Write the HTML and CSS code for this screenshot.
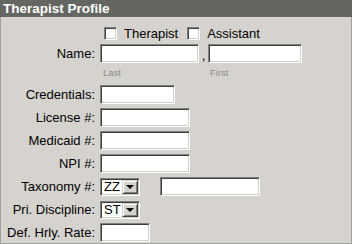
FILE: index.html
```html
<!DOCTYPE html>
<html>
<head>
<meta charset="utf-8">
<link rel="stylesheet" href="styles.css">
</head>
<body>
<div class="panel">
  <div class="header">Therapist Profile</div>
  <div class="form">
    <div class="row check-row">
      <span class="label"></span>
      <div class="field">
        <span class="check"></span><span class="check-text">Therapist</span>
        <span class="check check2"></span><span class="check-text">Assistant</span>
      </div>
    </div>
    <div class="row">
      <span class="label">Name:</span>
      <div class="field">
        <span class="input w-last"></span><span class="comma">,</span><span class="input w-first"></span>
      </div>
    </div>
    <div class="row sub-row">
      <span class="label"></span>
      <div class="field">
        <span class="sub sub-last">Last</span><span class="sub">First</span>
      </div>
    </div>
    <div class="row">
      <span class="label">Credentials:</span>
      <div class="field"><span class="input w-cred"></span></div>
    </div>
    <div class="row">
      <span class="label">License #:</span>
      <div class="field"><span class="input w-lic"></span></div>
    </div>
    <div class="row">
      <span class="label">Medicaid #:</span>
      <div class="field"><span class="input w-lic"></span></div>
    </div>
    <div class="row">
      <span class="label">NPI #:</span>
      <div class="field"><span class="input w-lic"></span></div>
    </div>
    <div class="row">
      <span class="label">Taxonomy #:</span>
      <div class="field">
        <span class="select"><span class="sel-text">ZZ</span><span class="sel-btn"><span class="tri"></span></span></span>
        <span class="input w-tax"></span>
      </div>
    </div>
    <div class="row">
      <span class="label">Pri. Discipline:</span>
      <div class="field">
        <span class="select"><span class="sel-text">ST</span><span class="sel-btn"><span class="tri"></span></span></span>
      </div>
    </div>
    <div class="row">
      <span class="label">Def. Hrly. Rate:</span>
      <div class="field"><span class="input w-rate"></span></div>
    </div>
  </div>
</div>
</body>
</html>
```

FILE: styles.css
```css
html, body {
  margin: 0;
  padding: 0;
}
body {
  font-family: "Liberation Sans", Arial, sans-serif;
  font-size: 13px;
  color: #000;
  background: #d6d3ce;
}
.panel {
  width: 352px;
  height: 244px;
  box-sizing: border-box;
  border: 1px solid #a09f9c;
  border-top: none;
  background: #d6d3ce;
}
.header {
  height: 17px;
  line-height: 17px;
  background: #646662;
  color: #fff;
  font-weight: bold;
  font-size: 13.5px;
  padding-left: 3px;
  margin: 0 -1px;
}
.form {
  display: flex;
  flex-direction: column;
  gap: 4px;
  padding-top: 10px;
}
.row {
  display: flex;
  align-items: center;
  height: 19px;
  gap: 5px;
}
.label {
  width: 94px;
  flex: none;
  text-align: right;
  line-height: 19px;
  white-space: nowrap;
}
.field {
  display: flex;
  align-items: center;
}
.check-row {
  height: 13px;
}
.check {
  flex: none;
  width: 13px;
  height: 13px;
  box-sizing: border-box;
  background: #fff;
  border: 1px solid;
  border-color: #808080 #fff #fff #808080;
  box-shadow: inset 1px 1px #404040, inset -1px -1px #d4d0c8;
  margin-left: 4px;
}
.check-text {
  margin-left: 7px;
}
.check2 {
  margin-left: 9px;
}
.input {
  display: block;
  flex: none;
  height: 19px;
  box-sizing: border-box;
  background: #fff;
  border: 1px solid;
  border-color: #808080 #fff #fff #808080;
  box-shadow: inset 1px 1px #404040, inset -1px -1px #d4d0c8;
}
.w-last { width: 99px; }
.w-first { width: 94px; }
.w-cred { width: 75px; }
.w-lic { width: 90px; }
.w-rate { width: 50px; }
.w-tax { width: 100px; margin-left: 20px; }
.comma {
  width: 9px;
  text-align: center;
  align-self: flex-end;
  line-height: 15px;
}
.sub-row {
  height: 14px;
  align-items: flex-start;
}
.sub {
  font-size: 9.5px;
  color: #8a8a8a;
  line-height: 12px;
}
.sub-last {
  margin-left: 3px;
  width: 107px;
}
.select {
  flex: none;
  width: 40px;
  height: 18px;
  box-sizing: border-box;
  display: flex;
  align-items: center;
  justify-content: space-between;
  background: #fff;
  border: 1px solid;
  border-color: #808080 #fff #fff #808080;
  box-shadow: inset 1px 1px #404040, inset -1px -1px #d4d0c8;
  padding: 2px 1px 2px 3px;
}
.sel-text {
  font-size: 13px;
  line-height: 14px;
}
.sel-btn {
  flex: none;
  width: 16px;
  height: 14px;
  box-sizing: border-box;
  background: #d6d3ce;
  border: 1px solid;
  border-color: #d4d0c8 #404040 #404040 #d4d0c8;
  box-shadow: inset 1px 1px #fff, inset -1px -1px #808080;
  display: flex;
  align-items: center;
  justify-content: center;
}
.tri {
  width: 0;
  height: 0;
  border-left: 4px solid transparent;
  border-right: 4px solid transparent;
  border-top: 4px solid #000;
}
```
